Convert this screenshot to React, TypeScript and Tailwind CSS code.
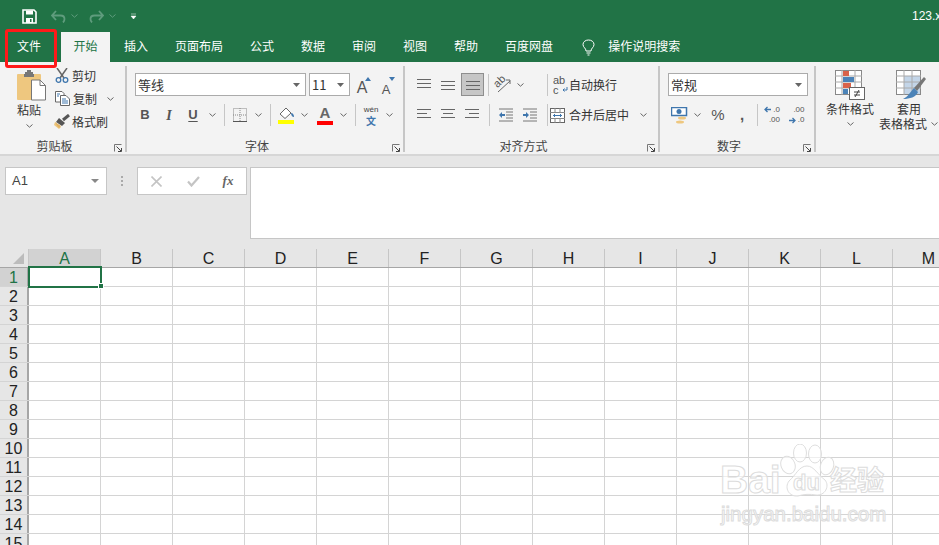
import React from 'react';

const cjk = "font-['Noto_Sans_CJK_SC','Liberation_Sans',sans-serif]";
const columns = ['A', 'B', 'C', 'D', 'E', 'F', 'G', 'H', 'I', 'J', 'K', 'L', 'M'];
const rows = Array.from({ length: 15 }, (_, i) => i + 1);
const tabs = ['插入', '页面布局', '公式', '数据', '审阅', '视图', '帮助', '百度网盘'];

function Chevron({ className = '', color = '#666' }: { className?: string; color?: string }) {
  return (
    <svg width="7" height="4" viewBox="0 0 7 4" className={`shrink-0 ${className}`}>
      <path d="M0.5 0.5L3.5 3.2L6.5 0.5" fill="none" stroke={color} strokeWidth="1" />
    </svg>
  );
}

function ChevronSlot({ className = 'w-[14px]' }: { className?: string }) {
  return (
    <div className={`flex items-center justify-center ${className}`}>
      <Chevron />
    </div>
  );
}

function Sep() {
  return (
    <div className="flex w-[10px] justify-center">
      <div className="h-[22px] w-px bg-[#c6c6c6]" />
    </div>
  );
}

function Launcher() {
  return (
    <svg width="8" height="8" viewBox="0 0 8 8" className="absolute right-[3px] bottom-0">
      <path d="M0.5 7.5V0.5H7.5" fill="none" stroke="#777" />
      <path d="M2.5 2.5L7 7M7.5 4V7.5H4" fill="none" stroke="#444" />
    </svg>
  );
}

function Lines({ widths, x }: { widths: number[]; x: number[] }) {
  return (
    <svg width="16" height="14" viewBox="0 0 16 14">
      {widths.map((w, i) => (
        <rect key={i} x={x[i]} y={i * 4 + 1} width={w} height="1" fill="#666" />
      ))}
    </svg>
  );
}

function Combo({ text, className }: { text: string; className: string }) {
  return (
    <div className={`flex h-[23px] items-center justify-between border border-[#ababab] bg-white pr-[5px] pl-[2px] text-[13px] text-[#333] ${className}`}>
      <span>{text}</span>
      <svg width="7" height="4" viewBox="0 0 7 4">
        <path d="M0 0H7L3.5 4Z" fill="#666" />
      </svg>
    </div>
  );
}

function Slot({ children, className = 'w-[24px]' }: { children: React.ReactNode; className?: string }) {
  return <div className={`flex h-[22px] items-center justify-center ${className}`}>{children}</div>;
}

function GroupLabel({ children }: { children: React.ReactNode }) {
  return <div className="absolute inset-x-0 bottom-[-3px] h-[18px] pr-[16px] text-center text-[12px] leading-[18px] text-[#444]">{children}</div>;
}

function PasteIcon() {
  return (
    <svg width="30" height="31" viewBox="0 0 30 31">
      <rect x="0" y="4" width="24" height="26" rx="1" fill="#eec77f" />
      <path d="M8 4V2H10V0H14V2H16V4H17V7H7V4Z" fill="#777" />
      <path d="M14.5 10H23L28.5 15.5V30H14.5Z" fill="#fff" stroke="#777" />
      <path d="M23 10V15.5H28.5" fill="none" stroke="#777" />
    </svg>
  );
}

function ScissorsIcon() {
  return (
    <svg width="14" height="15" viewBox="0 0 14 15">
      <path d="M2 0L9 10M12 0L5 10" stroke="#666" strokeWidth="1.5" />
      <circle cx="3.5" cy="12" r="2.3" fill="none" stroke="#3f76ad" strokeWidth="1.3" />
      <circle cx="10.5" cy="12" r="2.3" fill="none" stroke="#3f76ad" strokeWidth="1.3" />
    </svg>
  );
}

function CopyIcon() {
  return (
    <svg width="15" height="15" viewBox="0 0 15 15">
      <path d="M.5.5H7L9 2.5V11H.5Z" fill="#fff" stroke="#666" />
      <path d="M5.5 4.5H11L14.5 8V14.5H5.5Z" fill="#fff" stroke="#666" />
      <path d="M7 8H11M7 10H13M7 12H13M2 3H5M2 5H4" stroke="#3f76ad" />
    </svg>
  );
}

function BrushIcon() {
  return (
    <svg width="16" height="15" viewBox="0 0 16 15">
      <path d="M9 6L15 1" stroke="#555" strokeWidth="3" />
      <path d="M5 4L11 9L8 12L2 8Z" fill="#555" />
      <path d="M1 8L7 13L5 15L0 11Z" fill="#eec77f" />
      <path d="M1 8L7 12L5 14L3 12Z" fill="#e2b363" />
    </svg>
  );
}

function BorderIcon() {
  return (
    <svg width="14" height="14" viewBox="0 0 14 14">
      <rect x=".5" y=".5" width="13" height="13" fill="none" stroke="#888" strokeDasharray="1 1" />
      <path d="M7 0V14M0 7H14" stroke="#888" strokeDasharray="1 1" />
      <path d="M0 13.5H14" stroke="#555" />
    </svg>
  );
}

function FillIcon() {
  return (
    <svg width="17" height="17" viewBox="0 0 17 17">
      <path d="M8 1L2 7L7 11.5L13 6Z" fill="#fff" stroke="#666" />
      <path d="M13 6C15 6 16 8 16 10C14 10 13 8 13 6Z" fill="#3f76ad" />
      <rect x="0" y="13" width="16" height="4" fill="#ffff00" />
    </svg>
  );
}

function ColorA() {
  return (
    <div className="flex h-[22px] w-[16px] flex-col items-center">
      <span className="font-['Liberation_Sans',sans-serif] text-[15px] leading-[17px] font-bold text-[#666]">A</span>
      <div className="h-[4px] w-[16px] bg-[#ff0000]" />
    </div>
  );
}

function SizeA({ up }: { up: boolean }) {
  return (
    <div className="relative flex h-[22px] w-[18px] items-end justify-center">
      <span className={`font-['Liberation_Sans',sans-serif] leading-none text-[#555] ${up ? 'text-[16px]' : 'text-[13px]'}`}>A</span>
      <svg width="6" height="4" viewBox="0 0 6 4" className="absolute top-[3px] right-0">
        <path d={up ? 'M0 4L3 0L6 4Z' : 'M0 0L3 4L6 0Z'} fill="#3f76ad" />
      </svg>
    </div>
  );
}

function Orientation() {
  return (
    <div className="relative h-[20px] w-[18px]">
      <span className="absolute top-[0px] left-[-1px] block -rotate-45 font-['Liberation_Sans',sans-serif] text-[11px] leading-[12px] text-[#555]">ab</span>
      <svg width="18" height="20" viewBox="0 0 18 20" className="absolute top-0 left-0">
        <path d="M4 17L16 6M12 5H16V9" fill="none" stroke="#666" />
      </svg>
    </div>
  );
}

function IndentIcon({ right }: { right: boolean }) {
  return (
    <svg width="16" height="14" viewBox="0 0 16 14">
      <path d="M1 1H15M8 4H15M8 7H15M8 10H15M1 13H15" stroke="#777" />
      <path d={right ? 'M1 6H4V4L7 7L4 10V8H1Z' : 'M7 6H4V4L1 7L4 10V8H7Z'} fill="#3f76ad" />
    </svg>
  );
}

function MergeIcon() {
  return (
    <svg width="15" height="15" viewBox="0 0 15 15" className="shrink-0">
      <rect x=".5" y=".5" width="14" height="14" fill="#fff" stroke="#666" />
      <path d="M0 4.5H15M0 10.5H15M5 0V4M10 0V4M5 11V15M10 11V15" stroke="#888" />
      <path d="M3 7.5H12M3.5 7.5L5 6M3.5 7.5L5 9M11.5 7.5L10 6M11.5 7.5L10 9" fill="none" stroke="#3f76ad" />
    </svg>
  );
}

function CurrencyIcon() {
  return (
    <svg width="17" height="17" viewBox="0 0 17 17">
      <rect x=".5" y=".5" width="15" height="8" fill="#fff" stroke="#3f76ad" strokeWidth="1.5" />
      <circle cx="8" cy="4.5" r="2.5" fill="#3f76ad" />
      <ellipse cx="11" cy="11" rx="4" ry="1.5" fill="#eec77f" />
      <ellipse cx="9" cy="15" rx="4" ry="1.5" fill="#eec77f" />
    </svg>
  );
}

function DecimalIcon({ more }: { more: boolean }) {
  return (
    <div className="relative h-[18px] w-[16px] font-['Liberation_Sans',sans-serif] text-[8px] leading-[8px] text-[#555]">
      <span className="absolute top-0 right-0">{more ? '.00' : '.0'}</span>
      <span className="absolute right-0 bottom-0">{more ? '.0' : '.00'}</span>
      <svg width="7" height="7" viewBox="0 0 7 7" className={`absolute left-0 ${more ? 'bottom-0' : 'top-0'}`}>
        <path d={more ? 'M0 3.5H6M3.5 1L6 3.5L3.5 6' : 'M7 3.5H1M3.5 1L1 3.5L3.5 6'} fill="none" stroke="#3f76ad" strokeWidth="1.3" />
      </svg>
    </div>
  );
}

function CondFormatIcon() {
  return (
    <svg width="31" height="30" viewBox="0 0 31 30">
      <rect x=".5" y=".5" width="26" height="24" fill="#fff" stroke="#888" />
      <path d="M7 0V25M20 0V25M0 6H27M0 12H27M0 18H27" stroke="#aaa" />
      <rect x="8" y="1" width="6" height="5" fill="#d9634a" />
      <rect x="8" y="7" width="11" height="5" fill="#4b83b8" />
      <rect x="8" y="13" width="8" height="5" fill="#d9634a" />
      <rect x="8" y="19" width="5" height="5" fill="#4b83b8" />
      <rect x="14.5" y="17.5" width="15" height="12" fill="#fff" stroke="#666" />
      <path d="M19 22H25M19 25H25M24 20L20 27" stroke="#444" />
    </svg>
  );
}

function TableFormatIcon() {
  return (
    <svg width="31" height="30" viewBox="0 0 31 30">
      <rect x=".5" y=".5" width="24" height="24" fill="#fff" stroke="#888" />
      <rect x="8" y="6" width="16" height="18" fill="#c3d5e8" />
      <path d="M8 0V25M16 0V25M0 6H25M0 12H25M0 18H25" stroke="#aaa" />
      <path d="M18 18L28 7L30 9L21 21Z" fill="#777" />
      <path d="M18 18L22 22C20 27 14 29 7 29C12 27 14 22 18 18Z" fill="#4b83b8" />
    </svg>
  );
}

function SaveIcon() {
  return (
    <svg width="15" height="15" viewBox="0 0 15 15" className="shrink-0">
      <path d="M1 1H12L14 3V14H1Z" fill="none" stroke="#fff" strokeWidth="1.6" />
      <rect x="4" y="1.5" width="7" height="4" fill="#fff" />
      <rect x="4" y="9" width="7" height="5" fill="#fff" />
      <rect x="8" y="10" width="1.5" height="3" fill="#217346" />
    </svg>
  );
}

function Arrow({ flip }: { flip: boolean }) {
  return (
    <svg width="15" height="13" viewBox="0 0 15 13" className={`shrink-0 ${flip ? '-scale-x-100' : ''}`}>
      <path d="M1 5.5H9.5C12 5.5 13.5 7 13.5 9C13.5 10.5 13 11.5 12 12.5M5 1L1 5.5L5 10" fill="none" stroke="#5f9c7d" strokeWidth="1.8" />
    </svg>
  );
}

function Bulb() {
  return (
    <svg width="13" height="17" viewBox="0 0 13 17" className="shrink-0">
      <path d="M4 12C4 9 1 8.5 1 5.5C1 2.8 3.5 1 6.5 1C9.5 1 12 2.8 12 5.5C12 8.5 9 9 9 12Z" fill="none" stroke="#fff" />
      <path d="M4.5 14H8.5M5.5 16H7.5" stroke="#fff" />
    </svg>
  );
}

function Paw() {
  return (
    <svg width="56" height="54" viewBox="0 0 56 54" className="absolute top-0 left-0">
      <g fill="#ffffff" fillOpacity="0.6" stroke="#dedede" strokeWidth="1">
        <ellipse cx="8" cy="21" rx="7" ry="9" transform="rotate(-20 8 21)" />
        <ellipse cx="20" cy="9" rx="6.5" ry="9" />
        <ellipse cx="35" cy="10" rx="6.5" ry="9" />
        <ellipse cx="47" cy="22" rx="6.5" ry="9" transform="rotate(20 47 22)" />
        <path d="M27 22C34 22 38 31 45 36C50 42 45 52 36 51C30 50 24 50 18 52C9 53 4 44 9 37C16 31 19 22 27 22Z" />
      </g>
    </svg>
  );
}

function Watermark() {
  const stroke = 'text-white/60 [-webkit-text-stroke:1px_#dcdcdc]';
  return (
    <div className={`pointer-events-none absolute top-[444px] left-[718px] h-[84px] w-[176px] ${stroke}`}>
      <span className="absolute top-[14px] left-[2px] font-['Liberation_Sans',sans-serif] text-[39px] leading-[44px] font-bold">Bai</span>
      <div className="absolute top-0 left-[62px] h-[54px] w-[56px]">
        <Paw />
        <span className="absolute top-[27px] left-[13px] font-['Liberation_Sans',sans-serif] text-[22px] leading-[24px] font-bold">du</span>
      </div>
      <span className={`absolute top-[15px] left-[112px] text-[27px] leading-[40px] font-bold ${cjk}`}>经验</span>
      <span className="absolute top-[58px] left-[3px] font-['Liberation_Sans',sans-serif] text-[20.5px] leading-[24px] whitespace-nowrap">jingyan.baidu.com</span>
    </div>
  );
}

function Ribbon() {
  return (
    <div className="flex h-[94px] shrink-0 border-b-2 border-[#d6d6d6] bg-[#f3f3f3] pt-[4px]">
      {/* 剪贴板 */}
      <div className="relative h-[86px] w-[127px] shrink-0 border-r-2 border-[#c6c6c6]">
        <div className="flex pt-[4px] pl-[17px]">
          <div className="flex w-[30px] flex-col items-start">
            <PasteIcon />
            <span className="text-[12px] leading-[17px] text-[#333]">粘贴</span>
            <Chevron className="mt-[6px] ml-[9px]" />
          </div>
          <div className="-mt-[6px] ml-[8px] flex flex-col text-[12px] text-[#333]">
            <div className="flex h-[23px] items-center gap-[2px]"><ScissorsIcon /><span className="ml-[1px]">剪切</span></div>
            <div className="flex h-[23px] items-center gap-[3px]"><CopyIcon /><span>复制</span><Chevron className="ml-[7px]" /></div>
            <div className="-ml-[1px] flex h-[23px] items-center gap-[2px]"><BrushIcon /><span>格式刷</span></div>
          </div>
        </div>
        <GroupLabel>剪贴板</GroupLabel>
        <Launcher />
      </div>

      {/* 字体 */}
      <div className="relative h-[86px] w-[278px] shrink-0 border-r-2 border-[#c6c6c6] pt-[7px] pl-[6px]">
        <div className="flex h-[23px] items-center">
          <Combo text="等线" className="ml-[2px] w-[171px]" />
          <Combo text="11" className="ml-[3px] w-[41px]" />
          <div className="ml-[3px] flex gap-[6px]"><SizeA up /><SizeA up={false} /></div>
        </div>
        <div className="mt-[8px] flex items-center">
          <Slot><span className="font-['Liberation_Sans',sans-serif] text-[13px] font-bold text-[#555]">B</span></Slot>
          <Slot><span className="font-['Liberation_Serif',serif] text-[14px] font-bold text-[#555] italic">I</span></Slot>
          <Slot><span className="font-['Liberation_Sans',sans-serif] text-[13px] font-bold text-[#555] underline underline-offset-2">U</span></Slot>
          <ChevronSlot />
          <Sep />
          <Slot className="w-[22px]"><BorderIcon /></Slot>
          <ChevronSlot />
          <Sep />
          <Slot className="w-[22px]"><FillIcon /></Slot>
          <ChevronSlot />
          <Slot className="ml-[3px] w-[22px]"><ColorA /></Slot>
          <ChevronSlot />
          <Sep />
          <Slot className="w-[22px]">
            <div className="flex flex-col items-center">
              <span className="font-['Liberation_Sans',sans-serif] text-[8px] leading-[10px] text-[#444]">wén</span>
              <span className="text-[10px] leading-[11px] font-bold text-[#3f76ad]">文</span>
            </div>
          </Slot>
          <ChevronSlot />
        </div>
        <GroupLabel>字体</GroupLabel>
        <Launcher />
      </div>

      {/* 对齐方式 */}
      <div className="relative h-[86px] w-[255px] shrink-0 border-r-2 border-[#c6c6c6] pt-[7px] pl-[7px]">
        <div className="flex h-[23px] items-center">
          <Slot><Lines widths={[14, 14, 14]} x={[1, 1, 1]} /></Slot>
          <Slot className="w-[24px] pt-[4px]"><Lines widths={[14, 14, 14]} x={[1, 1, 1]} /></Slot>
          <div className="ml-[1px] flex h-[23px] w-[23px] items-end justify-center border border-[#8e8e8e] bg-[#c6c6c6] pb-[1px]">
            <Lines widths={[14, 14, 14]} x={[1, 1, 1]} />
          </div>
          <div className="ml-[-1px]"><Sep /></div>
          <Slot className="ml-[-1px] w-[22px]"><Orientation /></Slot>
          <ChevronSlot className="w-[12px]" />
          <div className="ml-[16px]"><Sep /></div>
          <div className="ml-[1px] flex items-center text-[12px] text-[#333]">
            <div className="relative h-[20px] w-[15px] font-['Liberation_Sans',sans-serif] text-[11px] leading-[10px] text-[#555]">
              ab<br />c
              <svg width="6" height="6" viewBox="0 0 6 6" className="absolute right-0 bottom-[2px]">
                <path d="M5 0V3H1M2.5 1.5L1 3L2.5 4.5" fill="none" stroke="#3f76ad" />
              </svg>
            </div>
            <span className="ml-[1px]">自动换行</span>
          </div>
        </div>
        <div className="mt-[8px] flex items-center">
          <Slot><Lines widths={[14, 10, 14]} x={[1, 1, 1]} /></Slot>
          <Slot><Lines widths={[14, 10, 14]} x={[1, 3, 1]} /></Slot>
          <Slot><Lines widths={[14, 10, 14]} x={[1, 5, 1]} /></Slot>
          <Sep />
          <Slot className="w-[24px]"><IndentIcon right={false} /></Slot>
          <Slot className="w-[24px]"><IndentIcon right /></Slot>
          <Sep />
          <div className="ml-[-2px] flex items-center text-[12px] text-[#333]">
            <MergeIcon />
            <span className="ml-[4px]">合并后居中</span>
            <Chevron className="ml-[11px]" />
          </div>
        </div>
        <GroupLabel>对齐方式</GroupLabel>
        <Launcher />
      </div>

      {/* 数字 */}
      <div className="relative h-[86px] w-[156px] shrink-0 border-r-2 border-[#c6c6c6] pt-[7px] pl-[8px]">
        <Combo text="常规" className="w-[140px]" />
        <div className="mt-[8px] flex items-center">
          <Slot className="w-[22px]"><CurrencyIcon /></Slot>
          <ChevronSlot />
          <Slot className="w-[28px]"><span className="font-['Liberation_Sans',sans-serif] text-[15px] text-[#555]">%</span></Slot>
          <Slot className="w-[20px]"><span className="font-['Liberation_Sans',sans-serif] text-[15px] font-bold text-[#555]">,</span></Slot>
          <Sep />
          <Slot className="ml-[-2px] w-[24px]"><DecimalIcon more={false} /></Slot>
          <Slot className="w-[25px]"><DecimalIcon more /></Slot>
        </div>
        <GroupLabel>数字</GroupLabel>
        <Launcher />
      </div>

      {/* 样式 */}
      <div className="flex h-[86px] flex-1 overflow-hidden pt-[4px] text-[12px] text-[#333]">
        <div className="flex w-[70px] shrink-0 flex-col items-center pr-[2px]">
          <CondFormatIcon />
          <span className="leading-[17px] whitespace-nowrap">条件格式</span>
          <Chevron className="mt-[5px]" />
        </div>
        <div className="ml-[-7px] flex w-[60px] shrink-0 flex-col items-start">
          <div className="ml-[17px]"><TableFormatIcon /></div>
          <span className="ml-[18px] leading-[17px]">套用</span>
          <div className="flex items-center whitespace-nowrap">
            <span className="leading-[14px]">表格格式</span>
            <Chevron className="ml-[4px]" />
          </div>
        </div>
      </div>
    </div>
  );
}

function FormulaBar() {
  return (
    <div className="flex h-[93px] shrink-0 bg-[#e6e6e6] pt-[11px] pl-[5px]">
      <div className="flex h-[28px] w-[102px] items-center justify-between border border-[#c6c6c6] bg-white pr-[7px] pl-[6px] font-['Liberation_Sans',sans-serif] text-[13px] text-[#444]">
        A1
        <svg width="8" height="4" viewBox="0 0 8 4"><path d="M0 0H8L4 4Z" fill="#888" /></svg>
      </div>
      <div className="flex h-[28px] w-[30px] flex-col items-center justify-center gap-[2px]">
        <div className="h-[2px] w-[2px] bg-[#aaa]" />
        <div className="h-[2px] w-[2px] bg-[#aaa]" />
        <div className="h-[2px] w-[2px] bg-[#aaa]" />
      </div>
      <div className="flex h-[28px] w-[110px] items-center border border-[#c6c6c6] bg-white">
        <div className="flex w-[37px] justify-center">
          <svg width="11" height="11" viewBox="0 0 11 11"><path d="M0.5 0.5L10.5 10.5M10.5 0.5L0.5 10.5" stroke="#c4c4c4" strokeWidth="1.6" /></svg>
        </div>
        <div className="flex w-[36px] justify-center">
          <svg width="13" height="11" viewBox="0 0 13 11"><path d="M1 5.5L4.5 9.5L12 1" fill="none" stroke="#c4c4c4" strokeWidth="2.2" /></svg>
        </div>
        <span className="w-[34px] text-center font-['Liberation_Serif',serif] text-[13px] font-bold text-[#666] italic">fx</span>
      </div>
      <div className="ml-[3px] h-[72px] flex-1 border border-r-0 border-[#c6c6c6] bg-white" />
    </div>
  );
}

function Sheet() {
  return (
    <div className="flex-1 overflow-hidden bg-white font-['Liberation_Sans',sans-serif] text-[16px]">
      <div className="flex h-[19px] w-[990px] border-b border-[#a6a6a6] bg-[#e6e6e6]">
        <div className="flex w-[29px] shrink-0 items-end justify-end border-r border-[#c6c6c6] pr-[4px] pb-[3px]">
          <svg width="11" height="11" viewBox="0 0 11 11"><path d="M11 0V11H0Z" fill="#bcbcbc" /></svg>
        </div>
        {columns.map((c, i) => (
          <div
            key={c}
            className={`flex w-[72px] shrink-0 items-center justify-center border-r border-[#c6c6c6] pt-[2px] leading-none ${i === 0 ? 'bg-[#d2d2d2] text-[#217346]' : 'text-[#222]'}`}
          >
            {c}
          </div>
        ))}
      </div>
      {rows.map((r) => (
        <div key={r} className="flex h-[19px] w-[990px] border-b border-[#d4d4d4]">
          <div
            className={`flex w-[29px] shrink-0 items-center justify-center border-r-2 border-[#a6a6a6] pt-[2px] leading-none ${r === 1 ? 'bg-[#d2d2d2] text-[#217346]' : 'bg-[#e6e6e6] text-[#222]'}`}
          >
            {r}
          </div>
          {columns.map((c) => (
            <div key={c} className="w-[72px] shrink-0 border-r border-[#d4d4d4]" />
          ))}
        </div>
      ))}
    </div>
  );
}

export default function App() {
  return (
    <div className={`relative flex h-[545px] w-[939px] flex-col overflow-hidden ${cjk}`}>
      {/* 标题栏 */}
      <div className="flex h-[32px] shrink-0 items-center bg-[#217346] pl-[22px]">
        <SaveIcon />
        <div className="ml-[14px]"><Arrow flip={false} /></div>
        <Chevron className="ml-[5px]" color="#5f9c7d" />
        <div className="ml-[11px]"><Arrow flip /></div>
        <Chevron className="ml-[5px]" color="#5f9c7d" />
        <svg width="7" height="7" viewBox="0 0 7 7" className="ml-[14px] shrink-0">
          <path d="M1 1H6M1 3H6L3.5 6Z" fill="#fff" stroke="#fff" strokeWidth="0.5" />
        </svg>
        <div className="ml-auto w-[27px] overflow-hidden font-['Liberation_Sans',sans-serif] text-[12px] whitespace-nowrap text-white">123.xlsx - Excel</div>
      </div>

      {/* 选项卡 */}
      <div className="flex h-[30px] shrink-0 items-stretch bg-[#217346] pl-[4px] text-[12px] text-white">
        <div className="flex w-[50px] items-center justify-center pb-[2px]">文件</div>
        <div className="ml-[7px] flex w-[49px] items-center justify-center bg-[#f3f3f3] pb-[2px] text-[#217346]">开始</div>
        <div className="ml-[1px] flex items-stretch gap-[1px]">
          {tabs.map((t) => (
            <div key={t} className="flex items-center px-[13px] pb-[2px]">{t}</div>
          ))}
        </div>
        <div className="ml-[16px] flex items-center"><Bulb /></div>
        <div className="ml-[13px] flex items-center pb-[2px]">操作说明搜索</div>
      </div>

      <Ribbon />
      <FormulaBar />
      <Sheet />

      {/* 选中单元格 */}
      <div className="absolute top-[266px] left-[28px] h-[22px] w-[74px] border-2 border-[#217346]" />
      <div className="absolute top-[283px] left-[98px] h-[6px] w-[6px] border border-white bg-[#217346]" />

      {/* 红框标注 */}
      <div className="absolute top-[29px] left-[5px] h-[39px] w-[52px] rounded-[3px] border-[3px] border-[#ff1a1a]" />

      <Watermark />
    </div>
  );
}
